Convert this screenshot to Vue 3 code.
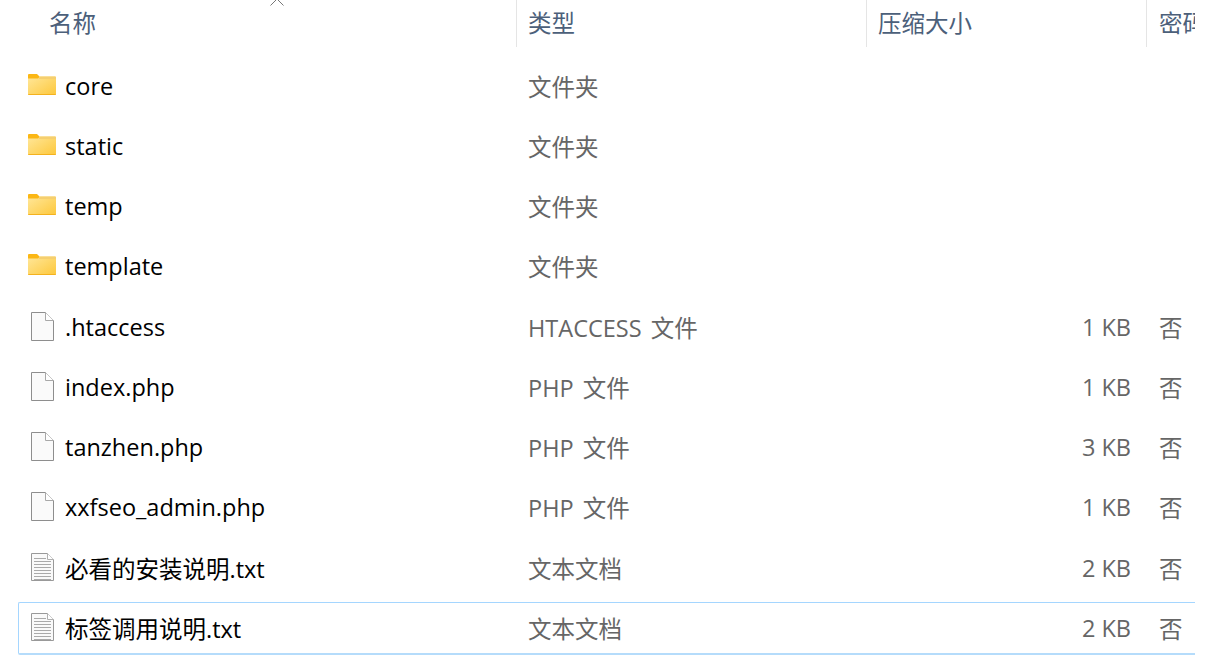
<script setup>
const rows = [
  { name: 'core', type: '文件夹', icon: 'folder' },
  { name: 'static', type: '文件夹', icon: 'folder' },
  { name: 'temp', type: '文件夹', icon: 'folder' },
  { name: 'template', type: '文件夹', icon: 'folder' },
  { name: '.htaccess', type: 'HTACCESS 文件', icon: 'file', size: '1 KB', pw: '否' },
  { name: 'index.php', type: 'PHP 文件', icon: 'file', size: '1 KB', pw: '否' },
  { name: 'tanzhen.php', type: 'PHP 文件', icon: 'file', size: '3 KB', pw: '否' },
  { name: 'xxfseo_admin.php', type: 'PHP 文件', icon: 'file', size: '1 KB', pw: '否' },
  { name: '必看的安装说明.txt', type: '文本文档', icon: 'text', size: '2 KB', pw: '否' },
  { name: '标签调用说明.txt', type: '文本文档', icon: 'text', size: '2 KB', pw: '否', selected: true },
]
const lines = [7, 10, 13, 16, 19, 22, 25, 28]
</script>

<template>
  <div class="list">
    <svg class="caret" width="16" height="6" viewBox="0 0 16 6"><path d="M1.5 5.5 L8 -1 L14.5 5.5" fill="none" stroke="#777" stroke-width="1"/></svg>
    <div class="head">
      <div class="hcell first">名称</div>
      <div class="hcell">类型</div>
      <div class="hcell">压缩大小</div>
      <div class="hcell pwh">密码</div>
    </div>
    <div v-for="r in rows" :key="r.name" class="row" :class="{ selected: r.selected }">
      <div class="name">
        <svg v-if="r.icon === 'folder'" class="icon folder" width="28" height="24" viewBox="0 0 28 24">
          <defs>
            <linearGradient id="fg" x1="0" y1="0" x2="1" y2="1">
              <stop offset="0" stop-color="#ffe79a"/>
              <stop offset="1" stop-color="#fdc83c"/>
            </linearGradient>
          </defs>
          <path d="M0 3 a1 1 0 0 1 1-1 h8 l3 3 v4 H0z" fill="#fbb715"/>
          <path d="M0 6.5 h10 l2-2 h15 a1 1 0 0 1 1 1 V22 a1 1 0 0 1-1 1 H1 a1 1 0 0 1-1-1z" fill="url(#fg)"/>
          <path d="M12 4.5 h15 a1 1 0 0 1 1 1 V7 H10.5z" fill="#f5cf70"/>
          <path d="M0 22 h28 v0 a1 1 0 0 1-1 1 H1 a1 1 0 0 1-1-1z" fill="#f4b21e"/>
        </svg>
        <svg v-else-if="r.icon === 'file'" class="icon doc" width="28" height="32" viewBox="0 0 28 32">
          <path d="M3.5 2.5 H17.5 L25.5 10.5 V30.5 H3.5z" fill="#fafafa" stroke="#8e8e8e"/>
          <path d="M17.5 2.5 V10.5 H25.5" fill="#fff" stroke="#a8a8a8"/>
        </svg>
        <svg v-else class="icon doc" width="28" height="32" viewBox="0 0 28 32">
          <path d="M3.5 2.5 H19.5 L25.5 8.5 V29.5 H3.5z" fill="#fafafa" stroke="#999"/>
          <path d="M19.5 2.5 V8.5 H25.5" fill="#fff" stroke="#b0b0b0"/>
          <path v-for="y in lines" :key="y" :d="`M6 ${y + 0.5} H${y < 10 ? 18 : 23}`" stroke="#aaa" stroke-width="1"/>
        </svg>
        <span class="label">{{ r.name }}</span>
      </div>
      <div class="cell type">{{ r.type }}</div>
      <div class="cell size">{{ r.size }}</div>
      <div class="cell pw">{{ r.pw }}</div>
    </div>
  </div>
</template>

<style scoped>
.list {
  position: relative;
  width: 1195px;
  height: 665px;
  overflow: hidden;
  background: #fff;
  font-family: "Open Sans", "Noto Sans CJK SC", sans-serif;
  font-size: 23.5px;
}
.caret {
  position: absolute;
  left: 269px;
  top: 0;
}
.head,
.row {
  display: grid;
  grid-template-columns: 516px 350px 280px 49px;
}
.head {
  height: 47px;
  margin-bottom: 8.5px;
  color: #4c607a;
}
.hcell {
  padding-left: 11px;
  border-left: 1px solid #e5e5e5;
  line-height: 47px;
  white-space: nowrap;
  overflow: hidden;
}
.hcell.first {
  padding-left: 49px;
  border-left: 0;
}
.hcell.pwh {
  padding-left: 12px;
}
.row {
  height: 60.25px;
  align-items: center;
  color: #666;
  box-sizing: border-box;
}
.row.selected {
  margin-left: 18px;
  grid-template-columns: 497px 350px 280px 49px;
  height: 53px;
  margin-top: 4.5px;
  border: 1px solid #a5d6ff;
  border-bottom-width: 2px;
  border-right: 0;
  border-bottom-color: #b5dcfb;
  border-radius: 2px 0 0 2px;
}
.name {
  display: flex;
  align-items: center;
  color: #000;
  padding-left: 28px;
}
.selected .name {
  padding-left: 9px;
}
.icon {
  flex: none;
  width: 28px;
  margin-right: 9px;
}
.folder {
  margin-bottom: 4px;
}
.doc {
  margin-bottom: 2px;
}
.label,
.cell {
  white-space: nowrap;
}
.cell {
  padding-left: 12px;
}
.type {
  word-spacing: 3px;
}
.size {
  text-align: right;
  padding: 0 15px 0 0;
}
.pw {
  padding-left: 13px;
}
</style>
